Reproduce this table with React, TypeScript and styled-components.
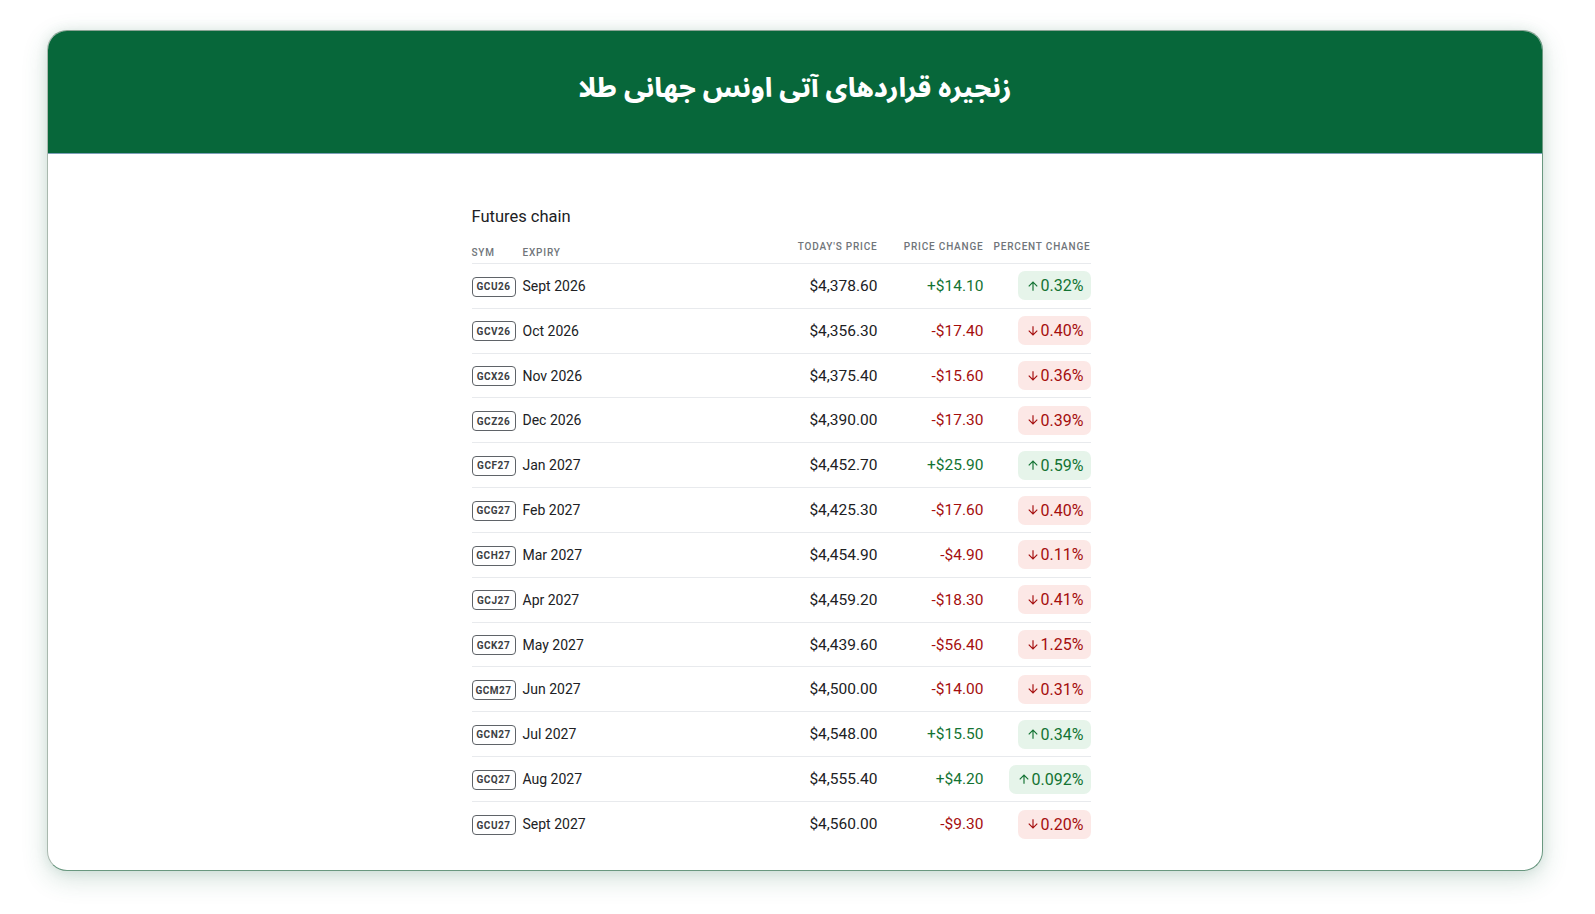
import React from "react";
import styled, { createGlobalStyle } from "styled-components";

const Global = createGlobalStyle`
  html, body { margin: 0; padding: 0; background: #ffffff; }
  body { font-family: Roboto, "Noto Sans", Arial, sans-serif; }
`;

const Page = styled.div`
  padding: 30px 52px 44px 47px;
`;

const Card = styled.div`
  width: 1496px;
  height: 841px;
  box-sizing: border-box;
  border-radius: 20px;
  border: 1px solid #6a9880;
  border-left-color: #a9b8ae;
  border-top-color: #8aa394;
  background: #ffffff;
  box-shadow: 0 8px 26px rgba(40, 110, 80, 0.2), 0 0 12px rgba(40, 110, 80, 0.1);
  overflow: hidden;
  display: flex;
  flex-direction: column;
`;

const Header = styled.div`
  height: 123px;
  flex: none;
  background: #07673a;
  border-bottom: 1px solid #7d9fb8;
  display: flex;
  align-items: center;
  justify-content: center;
  padding-bottom: 6px;
  box-sizing: border-box;
`;

const Title = styled.h1`
  margin: 0;
  direction: rtl;
  color: #ffffff;
  font-family: "Noto Sans Arabic", Vazirmatn, "DejaVu Sans", sans-serif;
  font-weight: 800;
  font-size: 26.5px;
  line-height: 40px;
`;

const Body = styled.div`
  display: flex;
  justify-content: center;
  padding: 53px 0 0 0;
`;

const Table = styled.div`
  width: 619px;
  margin-left: -28px;
`;

const Caption = styled.div`
  font-size: 16.5px;
  line-height: 20px;
  color: #202124;
  margin-bottom: 9px;
`;

const Grid = styled.div`
  display: grid;
  grid-template-columns: 51px 235px 120px 106px 107px;
  align-items: center;
`;

const HeadRow = styled(Grid)`
  height: 28px;
  border-bottom: 1px solid #e8eaed;
  box-sizing: border-box;
`;

const HeadCell = styled.div<{ $right?: boolean }>`
  font-size: 10px;
  line-height: 14px;
  font-weight: 500;
  letter-spacing: 0.8px;
  color: #70757a;
  text-transform: uppercase;
  text-align: ${(p) => (p.$right ? "right" : "left")};
  align-self: ${(p) => (p.$right ? "start" : "end")};
  padding-top: ${(p) => (p.$right ? "4px" : "0")};
  padding-bottom: ${(p) => (p.$right ? "0" : "3px")};
  white-space: nowrap;
`;

const Row = styled(Grid)<{ $last?: boolean }>`
  height: 44.83px;
  box-sizing: border-box;
  border-bottom: ${(p) => (p.$last ? "none" : "1px solid #e8eaed")};
`;

const Badge = styled.span`
  display: inline-flex;
  align-items: center;
  justify-content: center;
  width: 44px;
  height: 20px;
  box-sizing: border-box;
  border: 1px solid #5f6368;
  border-radius: 4px;
  font-size: 10px;
  font-weight: 700;
  letter-spacing: 0.5px;
  color: #3c4043;
`;

const Expiry = styled.div`
  font-size: 14px;
  color: #202124;
`;

const Num = styled.div<{ $tone?: "up" | "down" }>`
  text-align: right;
  font-size: 15.5px;
  color: ${(p) => (p.$tone === "up" ? "#137333" : p.$tone === "down" ? "#a50e0e" : "#202124")};
`;

const ChipCell = styled.div`
  display: flex;
  justify-content: flex-end;
`;

const Chip = styled.span<{ $up: boolean }>`
  display: inline-flex;
  align-items: center;
  gap: 1px;
  height: 29px;
  padding: 0 7px 0 8px;
  border-radius: 7px;
  font-size: 16px;
  font-weight: 400;
  background: ${(p) => (p.$up ? "#e6f4ea" : "#fce8e6")};
  color: ${(p) => (p.$up ? "#137333" : "#a50e0e")};
`;

const Arrow = ({ up }: { up: boolean }) => (
  <svg width="14" height="14" viewBox="0 0 24 24" style={{ transform: up ? "none" : "rotate(180deg)" }}>
    <path d="M4 12l1.41 1.41L11 7.83V20h2V7.83l5.58 5.59L20 12l-8-8-8 8z" fill="currentColor" />
  </svg>
);

type R = { sym: string; exp: string; price: string; chg: string; pct: string; up: boolean };

const rows: R[] = [
  { sym: "GCU26", exp: "Sept 2026", price: "$4,378.60", chg: "+$14.10", pct: "0.32%", up: true },
  { sym: "GCV26", exp: "Oct 2026", price: "$4,356.30", chg: "-$17.40", pct: "0.40%", up: false },
  { sym: "GCX26", exp: "Nov 2026", price: "$4,375.40", chg: "-$15.60", pct: "0.36%", up: false },
  { sym: "GCZ26", exp: "Dec 2026", price: "$4,390.00", chg: "-$17.30", pct: "0.39%", up: false },
  { sym: "GCF27", exp: "Jan 2027", price: "$4,452.70", chg: "+$25.90", pct: "0.59%", up: true },
  { sym: "GCG27", exp: "Feb 2027", price: "$4,425.30", chg: "-$17.60", pct: "0.40%", up: false },
  { sym: "GCH27", exp: "Mar 2027", price: "$4,454.90", chg: "-$4.90", pct: "0.11%", up: false },
  { sym: "GCJ27", exp: "Apr 2027", price: "$4,459.20", chg: "-$18.30", pct: "0.41%", up: false },
  { sym: "GCK27", exp: "May 2027", price: "$4,439.60", chg: "-$56.40", pct: "1.25%", up: false },
  { sym: "GCM27", exp: "Jun 2027", price: "$4,500.00", chg: "-$14.00", pct: "0.31%", up: false },
  { sym: "GCN27", exp: "Jul 2027", price: "$4,548.00", chg: "+$15.50", pct: "0.34%", up: true },
  { sym: "GCQ27", exp: "Aug 2027", price: "$4,555.40", chg: "+$4.20", pct: "0.092%", up: true },
  { sym: "GCU27", exp: "Sept 2027", price: "$4,560.00", chg: "-$9.30", pct: "0.20%", up: false },
];

export default function App() {
  return (
    <>
      <Global />
      <Page>
        <Card>
          <Header>
            <Title>زنجیره قراردهای آتی اونس جهانی طلا</Title>
          </Header>
          <Body>
            <Table>
              <Caption>Futures chain</Caption>
              <HeadRow>
                <HeadCell>Sym</HeadCell>
                <HeadCell>Expiry</HeadCell>
                <HeadCell $right>Today's price</HeadCell>
                <HeadCell $right>Price change</HeadCell>
                <HeadCell $right>Percent change</HeadCell>
              </HeadRow>
              {rows.map((r, i) => (
                <Row key={r.sym} $last={i === rows.length - 1}>
                  <div>
                    <Badge>{r.sym}</Badge>
                  </div>
                  <Expiry>{r.exp}</Expiry>
                  <Num>{r.price}</Num>
                  <Num $tone={r.up ? "up" : "down"}>{r.chg}</Num>
                  <ChipCell>
                    <Chip $up={r.up}>
                      <Arrow up={r.up} />
                      {r.pct}
                    </Chip>
                  </ChipCell>
                </Row>
              ))}
            </Table>
          </Body>
        </Card>
      </Page>
    </>
  );
}
